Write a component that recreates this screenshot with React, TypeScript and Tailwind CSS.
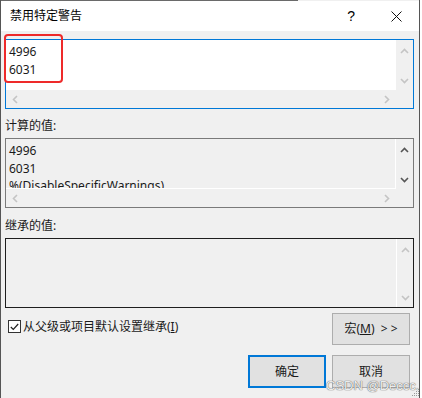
const font = "font-['Noto_Sans','Noto_Sans_CJK_SC',sans-serif]";

type Dir = 'up' | 'down' | 'left' | 'right';

function Chevron({ dir, color }: { dir: Dir; color: string }) {
  const paths: Record<Dir, string> = {
    up: 'M1 5 L4.5 1.5 L8 5',
    down: 'M1 1 L4.5 4.5 L8 1',
    left: 'M5 1 L1.5 4.5 L5 8',
    right: 'M1 1 L4.5 4.5 L1 8',
  };
  const horizontal = dir === 'left' || dir === 'right';
  return (
    <svg
      width={horizontal ? 6 : 9}
      height={horizontal ? 9 : 6}
      viewBox={horizontal ? '0 0 6 9' : '0 0 9 6'}
      fill="none"
    >
      <path d={paths[dir]} stroke={color} strokeWidth="1.6" />
    </svg>
  );
}

function VScroll({ color, className }: { color: string; className: string }) {
  return (
    <div className={`flex flex-col items-center justify-between bg-[#f0f0f0] ${className}`}>
      <Chevron dir="up" color={color} />
      <Chevron dir="down" color={color} />
    </div>
  );
}

function HScroll() {
  return (
    <div className="flex items-center justify-between bg-[#f0f0f0] px-[6px]">
      <Chevron dir="left" color="#c4c4c4" />
      <Chevron dir="right" color="#c4c4c4" />
    </div>
  );
}

function ValueBox({
  lines,
  border,
  contentClass,
  arrow,
}: {
  lines: string[];
  border: string;
  contentClass: string;
  arrow: string;
}) {
  return (
    <div className={`grid h-[70px] w-[409px] grid-cols-[1fr_17px] grid-rows-[1fr_18px] border ${border}`}>
      <div className={`overflow-hidden pl-[3px] pt-[3px] text-[12px] leading-[17.5px] text-[#1a1a1a] ${contentClass}`}>
        {lines.map((l) => (
          <div key={l} className="whitespace-nowrap">
            {l}
          </div>
        ))}
      </div>
      <VScroll color={arrow} className="pt-[8px] pb-[6px]" />
      <HScroll />
      <div className="bg-[#f0f0f0]" />
    </div>
  );
}

export default function App() {
  return (
    <div className={`relative h-[398px] w-[422px] overflow-hidden bg-white ${font}`}>
      <div className="flex h-full w-[420px] flex-col border-x border-[#555] bg-[#f0f0f0]">
        <div className="h-px w-[297px] bg-[#6a6a6a]" />
        <div className="flex h-[30px] items-center bg-white pl-[9px] text-[12px] text-black">
          <span className="flex-1">禁用特定警告</span>
          <span className="mr-[36px] font-['Liberation_Sans',sans-serif] text-[14px] leading-none">?</span>
          <svg width="11" height="11" viewBox="0 0 11 11" className="mr-[17px]">
            <path d="M0.5 0.5 L10.5 10.5 M10.5 0.5 L0.5 10.5" stroke="#111" strokeWidth="1" />
          </svg>
        </div>

        <div className="flex flex-col pl-[4px] pr-[5px] pt-[8px] text-[12px] text-[#1a1a1a]">
          <ValueBox
            lines={['4996', '6031']}
            border="border-[#0078d7]"
            contentClass="bg-white"
            arrow="#c4c4c4"
          />

          <div className="mt-[8px] mb-[4px] leading-[17px]">计算的值:</div>
          <ValueBox
            lines={['4996', '6031', '%(DisableSpecificWarnings)']}
            border="border-[#7a7a7a]"
            contentClass="bg-[#f0f0f0] border-r border-b border-white"
            arrow="#555"
          />

          <div className="mt-[9px] mb-[4px] leading-[17px]">继承的值:</div>
          <div className="flex h-[70px] w-[409px] border border-[#1e1e1e]">
            <div className="flex-1 border-r border-white bg-[#f0f0f0]" />
            <VScroll color="#c4c4c4" className="w-[16px] pt-[8px] pb-[6px]" />
          </div>

          <div className="flex items-start justify-between">
            <label className="ml-[3px] mt-[10px] flex items-center gap-[2px] leading-[17px]">
              <span className="flex h-[13px] w-[13px] items-center justify-center border border-[#333] bg-white">
                <svg width="9" height="8" viewBox="0 0 9 8">
                  <path d="M0.8 4 L3.3 6.5 L8.2 1" stroke="#222" strokeWidth="1.2" fill="none" />
                </svg>
              </span>
              <span>
                从父级或项目默认设置继承(<span className="underline">I</span>)
              </span>
            </label>
            <button className="mr-[4px] mt-[5px] h-[32px] w-[78px] border border-[#adadad] bg-[#e1e1e1] text-[12px] text-[#1a1a1a]">
              宏(<span className="underline">M</span>)&nbsp;&nbsp;&gt; &gt;
            </button>
          </div>

          <div className="mr-[4px] mt-[10px] flex justify-end gap-[6px]">
            <button className="h-[33px] w-[78px] border-2 border-[#0078d7] bg-[#e1e1e1] text-[12px] text-[#1a1a1a]">
              确定
            </button>
            <button className="h-[33px] w-[78px] border border-[#adadad] bg-[#e1e1e1] text-[12px] text-[#1a1a1a]">
              取消
            </button>
          </div>
        </div>
      </div>

      <div className="absolute left-[4px] top-[34px] h-[49px] w-[59px] rounded-[4px] border-2 border-[#ee2a2a]" />

      <div className="absolute left-[326px] top-[378px] font-['Liberation_Sans',sans-serif] text-[13px] leading-[16px] text-[rgba(255,255,255,0.9)] [text-shadow:0_0_1px_#666,0_0_1px_#666]">
        CSDN @Deccc.
      </div>

      <svg className="absolute left-[410px] top-[387px]" width="10" height="10" viewBox="0 0 10 10">
        <g fill="#9a9a9a">
          <rect x="8" y="2" width="1" height="1" />
          <rect x="6" y="4" width="1" height="1" />
          <rect x="8" y="4" width="1" height="1" />
          <rect x="4" y="6" width="1" height="1" />
          <rect x="6" y="6" width="1" height="1" />
          <rect x="8" y="6" width="1" height="1" />
          <rect x="2" y="8" width="1" height="1" />
          <rect x="4" y="8" width="1" height="1" />
          <rect x="6" y="8" width="1" height="1" />
          <rect x="8" y="8" width="1" height="1" />
        </g>
      </svg>
    </div>
  );
}
